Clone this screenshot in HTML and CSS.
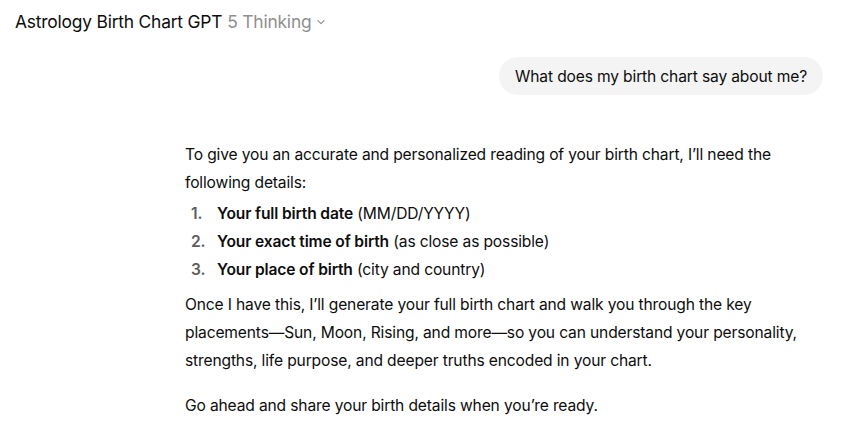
FILE: index.html
```html
<!DOCTYPE html>
<html>
<head>
<meta charset="utf-8">
<link rel="stylesheet" href="styles.css">
</head>
<body>
<header class="topbar">
  <span class="title">Astrology Birth Chart GPT</span>
  <span class="model">5 Thinking</span>
  <svg class="chev" width="10" height="10" viewBox="0 0 10 10"><path d="M2 3.6 L5 6.6 L8 3.6" fill="none" stroke="#8f8f8f" stroke-width="1.1" stroke-linecap="round" stroke-linejoin="round"/></svg>
</header>
<main class="thread">
  <div class="user-row">
    <div class="bubble">What does my birth chart say about me?</div>
  </div>
  <div class="reply">
    <p>To give you an accurate and personalized reading of your birth chart, I’ll need the following details:</p>
    <ol>
      <li><strong>Your full birth date</strong> (MM/DD/YYYY)</li>
      <li><strong>Your exact time of birth</strong> (as close as possible)</li>
      <li><strong>Your place of birth</strong> (city and country)</li>
    </ol>
    <p>Once I have this, I’ll generate your full birth chart and walk you through the key placements—Sun, Moon, Rising, and more—so you can understand your personality, strengths, life purpose, and deeper truths encoded in your chart.</p>
    <p>Go ahead and share your birth details when you’re ready.</p>
  </div>
</main>
</body>
</html>
```
FILE: styles.css
```css
* { box-sizing: border-box; }
html, body { margin: 0; padding: 0; background: #fff; }
body {
  font-family: Inter, "Noto Sans", sans-serif;
  color: #0d0d0d;
  -webkit-font-smoothing: antialiased;
}
.topbar {
  display: flex;
  align-items: center;
  height: 42px;
  padding-left: 15px;
  font-size: 17.4px;
  letter-spacing: -0.2px;
}
.title { color: #0d0d0d; }
.model { color: #8f8f8f; margin-left: 5px; }
.chev { margin-left: 5px; margin-top: 2px; }
.thread { padding: 15px 0 0 0; }
.user-row {
  display: flex;
  justify-content: flex-end;
  padding-right: 45px;
}
.bubble {
  background: #f4f4f4;
  border-radius: 19px;
  height: 38px;
  padding: 0 16px;
  display: flex;
  align-items: center;
  font-size: 15.6px;
  letter-spacing: -0.15px;
}
.reply {
  margin-left: 185px;
  width: 630px;
  margin-top: 46px;
  font-size: 15.6px;
  line-height: 28px;
  letter-spacing: -0.15px;
}
.reply p { margin: 0; }
.reply p + p { margin-top: 17px; }
.reply ol {
  margin: 3px 0 7px 0;
  padding: 0 0 0 6px;
  list-style: none;
  counter-reset: item;
}
.reply ol li { counter-increment: item; }
.reply ol li::before {
  content: counter(item) ".";
  display: inline-block;
  width: 26px;
  color: #5d5d5d;
  font-weight: 600;
}
.reply strong { font-weight: 600; }
```
